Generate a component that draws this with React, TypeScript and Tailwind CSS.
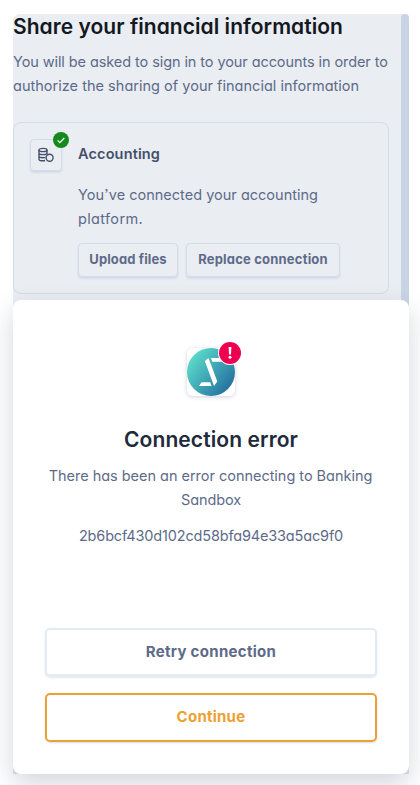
import type { ReactNode } from "react";

function DataIcon() {
  return (
    <svg width="16" height="16" viewBox="0 0 16 16" fill="none" stroke="#44506a" strokeWidth="1.4">
      <ellipse cx="5" cy="3" rx="4" ry="1.6" />
      <path d="M1 3v9.2c0 .9 1.7 1.6 4 1.6.8 0 1.5-.1 2.100-.3M9 3v4M1 6c0 .9 1.700 1.600 4 1.600S9 6.900 9 6M1 9.100c0 .9 1.700 1.600 4 1.600.9 0 1.700-.1 2.400-.3" />
      <circle cx="11.600" cy="10.700" r="3.500" />
    </svg>
  );
}

function SandboxLogo() {
  return (
    <svg width="48" height="48" viewBox="0 0 48 48">
      <defs>
        <linearGradient id="logo" x1="4" y1="8" x2="44" y2="40" gradientUnits="userSpaceOnUse">
          <stop offset="0" stopColor="#5cdccb" />
          <stop offset="1" stopColor="#24709f" />
        </linearGradient>
      </defs>
      <circle cx="24" cy="24" r="24" fill="url(#logo)" />
      <path d="M17.800 13l3.700-3 8.800 23.500-3.300 4.500zM24 10h12l-1.500 3.800h-9.200zM12 38l2.500-3.700h8.800l1.200 3.700z" fill="#fff" />
    </svg>
  );
}

function SmallButton({ children, className }: { children: ReactNode; className: string }) {
  return (
    <button
      className={`h-[34px] whitespace-nowrap rounded border border-[#d3dcea] text-[13px] font-bold text-[#5d6b89] shadow-[0_1px_1px_#d3dbe8,0_2px_2px_rgba(190,202,222,0.4)] ${className}`}
    >
      {children}
    </button>
  );
}

export default function App() {
  return (
    <main className="h-[785px] w-[420px] overflow-hidden bg-white pl-[13px] pt-[14px] font-['Inter','Noto_Sans',sans-serif] [font-feature-settings:'cv11','ss03']">
      <div className="w-[396px] rounded-t-lg bg-[#dfe2eb]">
        <section className="flex h-[294px] rounded-t-lg bg-[#eaedf2]">
          <div className="w-[388px]">
            <h1 className="whitespace-nowrap pt-px text-[21px] font-semibold leading-6 tracking-[0.045px] text-[#14181f]">
              Share your financial information
            </h1>
            <p className="mt-[11px] whitespace-nowrap text-[14.5px] leading-6 text-[#5d6b89]">
              <span className="block tracking-[-0.085px]">You will be asked to sign in to your accounts in order to</span>
              <span className="block tracking-[0.02px]">authorize the sharing of your financial information</span>
            </p>
            <div className="mt-[24px] flex h-[172px] w-[376px] rounded-lg border border-[#d3dcea] pl-4 pt-4">
              <div className="relative flex h-8 w-8 items-center justify-center rounded border border-[#d3dcea] shadow-[0_1px_1px_#d3dbe8,0_2px_2px_rgba(190,202,222,0.4)]">
                <DataIcon />
                <span className="absolute -right-[8px] -top-[8px] flex h-4 w-4 items-center justify-center rounded-full bg-[#138a1b]">
                  <svg width="8" height="7" viewBox="0 0 8 7" fill="none" stroke="#fff" strokeWidth="1.2">
                    <path d="M.6 3.400l2.200 2.200L7.300 1" />
                  </svg>
                </span>
              </div>
              <div className="ml-4 whitespace-nowrap">
                <h2 className="mt-[3px] text-[14.5px] font-semibold leading-6 tracking-[0.14px] text-[#44506a]">Accounting</h2>
                <p className="mt-[17px] text-[14.5px] leading-6 text-[#5d6b89]">
                  <span className="block tracking-[0.01px]">You’ve connected your accounting</span>
                  <span className="block tracking-[0.350px]">platform.</span>
                </p>
                <div className="mt-3 flex gap-2">
                  <SmallButton className="w-[100px] tracking-[0.120px]">Upload files</SmallButton>
                  <SmallButton className="w-[154px] tracking-[0.200px]">Replace connection</SmallButton>
                </div>
              </div>
            </div>
          </div>
          <div className="w-2 rounded-t-lg bg-[#c8d3e6]" />
        </section>

        <section className="relative -mt-2 flex h-[474px] flex-col items-center rounded-lg bg-white px-8 pt-12 text-center shadow-[0_10px_26px_rgba(40,50,90,0.2)]">
          <div className="relative flex h-12 w-12 rounded-md bg-white shadow-[0_1px_4px_rgba(50,60,100,0.22)]">
            <SandboxLogo />
            <span className="absolute -right-[6px] -top-[6px] flex h-[22px] w-[22px] items-center justify-center rounded-full bg-[#ee0050] ring-1 ring-white">
              <svg width="4" height="12" viewBox="0 0 4 12" fill="#fff">
                <path d="M.6 0h2.800l-.4 7.500H1z" />
                <circle cx="2" cy="10.300" r="1.500" />
              </svg>
            </span>
          </div>
          <h2 className="mt-7 whitespace-nowrap text-[21px] font-semibold leading-8 tracking-[0.1px] text-[#202a3a]">
            Connection error
          </h2>
          <p className="mt-2 whitespace-nowrap text-[14.5px] leading-6 text-[#5d6b89]">
            <span className="-ml-px block tracking-[-0.025px]">There has been an error connecting to Banking</span>
            <span className="block tracking-[-0.100px]">Sandbox</span>
          </p>
          <p className="mt-3 text-[14.5px] leading-6 tracking-[-0.160px] text-[#5d6b89]">2b6bcf430d102cd58bfa94e33a5ac9f0</p>
          <button className="mt-20 h-[49px] w-full rounded-[5px] border-2 border-b-[3px] border-[#e3ebf5] text-[15px] font-bold tracking-[0.300px] text-[#5d6b89] shadow-[0_1px_2px_rgba(50,60,100,0.12)]">
            Retry connection
          </button>
          <button className="mt-4 h-[49px] w-full rounded-[5px] border-2 border-[#eba133] text-[15px] font-bold tracking-[0.250px] text-[#eba133] shadow-[0_1px_2px_rgba(50,60,100,0.18)]">
            Continue
          </button>
        </section>
      </div>
    </main>
  );
}
